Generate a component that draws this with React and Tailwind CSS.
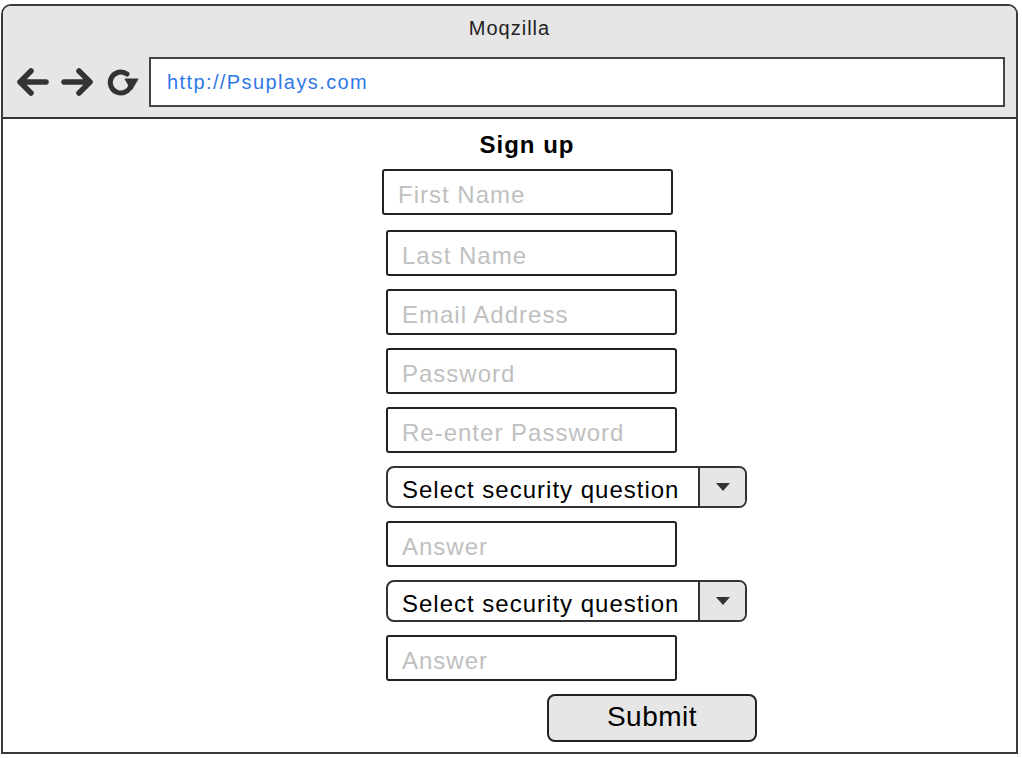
import { useState } from "react";

const font = "font-['Liberation_Sans',Arial,sans-serif]";

function BackIcon() {
    return (
        <svg width="34" height="30" viewBox="0 0 34 30" className="shrink-0">
            <path
                d="M4 15 H30 M15 4 L4 15 L15 26"
                fill="none"
                stroke="#333"
                strokeWidth="5.5"
                strokeLinecap="round"
                strokeLinejoin="round"
            />
        </svg>
    );
}

function ForwardIcon() {
    return (
        <svg width="34" height="30" viewBox="0 0 34 30" className="shrink-0">
            <path
                d="M4 15 H30 M19 4 L30 15 L19 26"
                fill="none"
                stroke="#333"
                strokeWidth="5.5"
                strokeLinecap="round"
                strokeLinejoin="round"
            />
        </svg>
    );
}

function ReloadIcon() {
    return (
        <svg width="33" height="30" viewBox="0 0 33 30" className="shrink-0">
            <path
                d="M21 7 A10.5 10.5 0 1 0 25 18"
                fill="none"
                stroke="#333"
                strokeWidth="5"
                strokeLinecap="round"
            />
            <path d="M19 12 L32 12 L25.5 23 Z" fill="#333" stroke="#333" strokeWidth="1" strokeLinejoin="round" />
        </svg>
    );
}

function Field({ placeholder, className = "" }) {
    const [value, setValue] = useState("");
    return (
        <input
            value={value}
            onChange={(e) => setValue(e.target.value)}
            placeholder={placeholder}
            className={`h-[46px] w-[291px] rounded-[3px] border-2 border-[#222] bg-white px-[14px] pt-[5px] text-[24px] tracking-[1px] text-black placeholder:text-[#c0c0c0] focus:outline-none ${className}`}
        />
    );
}

function QuestionSelect() {
    return (
        <div className="flex h-[42px] w-[361px] overflow-hidden rounded-[8px] border-2 border-[#333] bg-white">
            <div className="flex flex-1 items-center pl-[14px] pt-[6px] text-[24px] tracking-[1px] text-black">
                Select security question
            </div>
            <div className="flex w-[47px] items-center justify-center border-l-2 border-[#333] bg-[#e6e6e6]">
                <svg width="14" height="8" viewBox="0 0 14 8">
                    <path d="M0 0 H14 L7 8 Z" fill="#333" />
                </svg>
            </div>
        </div>
    );
}

export default function App() {
    return (
        <div className={`min-h-screen bg-white pl-[1px] pt-[4px] ${font}`}>
            <div className="flex h-[750px] w-[1017px] flex-col overflow-hidden rounded-t-[10px] border-2 border-[#3a3a3a]">
                {/* browser chrome */}
                <div className="h-[113px] shrink-0 border-b-2 border-[#333] bg-[#e6e6e6]">
                    <div className="pt-[10px] text-center text-[20px] leading-[24px] tracking-[1px] text-[#222]">
                        Moqzilla
                    </div>
                    <div className="mt-[17px] flex items-center pl-[13px] pr-[11px]">
                        <BackIcon />
                        <div className="ml-[10px]">
                            <ForwardIcon />
                        </div>
                        <div className="ml-[12px]">
                            <ReloadIcon />
                        </div>
                        <div className="ml-[10px] flex h-[50px] flex-1 items-center border-2 border-[#444] bg-white pl-[16px] text-[20px] tracking-[1.4px] text-[#2f78e8]">
                            http://Psuplays.com
                        </div>
                    </div>
                </div>

                {/* form */}
                <div className="flex flex-1 flex-col items-start bg-white pl-[383px]">
                    <div className="mt-[12px] w-[282px] text-center text-[24px] font-bold leading-[28px] tracking-[1px] text-black">
                        Sign up
                    </div>
                    <Field placeholder="First Name" className="-ml-1 mt-[10px]" />
                    <Field placeholder="Last Name" className="mt-[15px]" />
                    <Field placeholder="Email Address" className="mt-[13px]" />
                    <Field placeholder="Password" className="mt-[13px]" />
                    <Field placeholder="Re-enter Password" className="mt-[13px]" />
                    <div className="mt-[13px]">
                        <QuestionSelect />
                    </div>
                    <Field placeholder="Answer" className="mt-[13px]" />
                    <div className="mt-[13px]">
                        <QuestionSelect />
                    </div>
                    <Field placeholder="Answer" className="mt-[13px]" />
                    <button
                        type="button"
                        className="ml-[161px] mt-[13px] h-[48px] w-[210px] rounded-[8px] border-2 border-[#222] bg-[#e6e6e6] pb-[4px] text-[28px] tracking-[0.5px] text-black"
                    >
                        Submit
                    </button>
                </div>
            </div>
        </div>
    );
}
